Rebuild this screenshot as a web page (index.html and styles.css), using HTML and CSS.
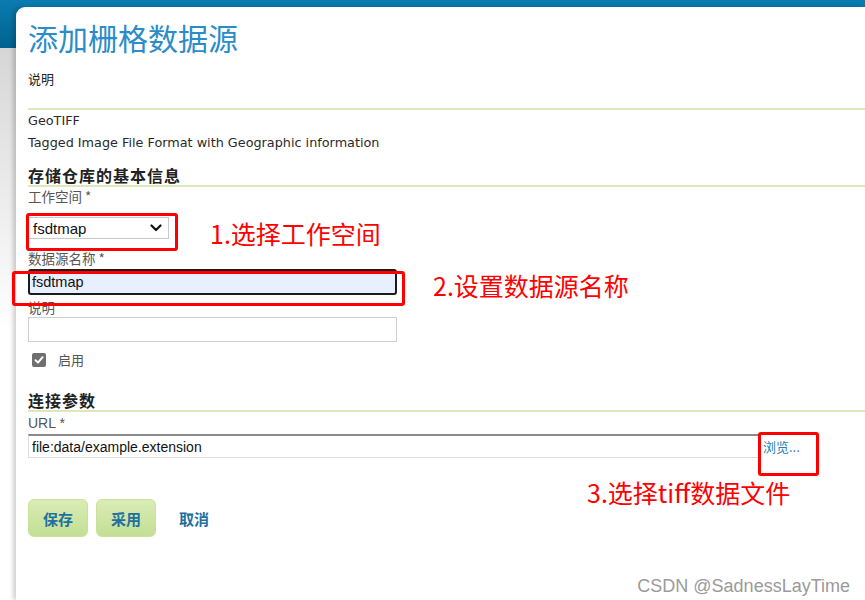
FILE: index.html
```html
<!DOCTYPE html>
<html lang="zh-CN">
<head>
  <meta charset="UTF-8">
  <title>添加栅格数据源</title>
  <link rel="stylesheet" href="styles.css">
</head>
<body>

<div class="page">
  <div class="panel">
    <h1 class="title">添加栅格数据源</h1>
    <p class="desc">说明</p>
    <div class="rule"></div>

    <div class="info">
      <div>GeoTIFF</div>
      <div>Tagged Image File Format with Geographic information</div>
    </div>

    <h2 class="section">存储仓库的基本信息</h2>
    <div class="rule"></div>

    <label class="field-label">工作空间 *</label>
    <div class="select">
      <span>fsdtmap</span>
      <svg width="12" height="8" viewBox="0 0 12 8"><path d="M1.5 1.5 L6 6 L10.5 1.5" fill="none" stroke="#111" stroke-width="2.2" stroke-linecap="round" stroke-linejoin="round"/></svg>
    </div>

    <label class="field-label label-name">数据源名称 *</label>
    <input class="text-input focused" type="text" value="fsdtmap">

    <label class="field-label label-desc">说明</label>
    <input class="text-input plain" type="text">

    <div class="check-row">
      <span class="checkbox">
        <svg width="10" height="10" viewBox="0 0 10 10"><path d="M1.5 5.2 L4 7.6 L8.6 2.2" fill="none" stroke="#fff" stroke-width="2" stroke-linecap="round" stroke-linejoin="round"/></svg>
      </span>
      <span>启用</span>
    </div>

    <h2 class="section section-conn">连接参数</h2>
    <div class="rule"></div>

    <label class="field-label label-url">URL *</label>
    <div class="url-row">
      <input class="text-input url" type="text" value="file:data/example.extension">
      <a class="browse" href="#">浏览...</a>
    </div>

    <div class="actions">
      <button class="btn">保存</button>
      <button class="btn">采用</button>
      <a class="cancel" href="#">取消</a>
    </div>
  </div>

  <!-- annotations drawn over the screenshot -->
  <div class="mark mark-1"></div>
  <div class="mark mark-2"></div>
  <div class="mark mark-3"></div>
  <div class="note note-1">1.选择工作空间</div>
  <div class="note note-2">2.设置数据源名称</div>
  <div class="note note-3">3.选择tiff数据文件</div>
  <div class="watermark">CSDN @SadnessLayTime</div>
</div>

</body>
</html>
```

FILE: styles.css
```css
html, body {
  margin: 0;
  height: 100%;
}
body {
  font-family: "DejaVu Sans", "Noto Sans CJK SC", sans-serif;
  color: #333;
  background: linear-gradient(to bottom, #0a7cb0 0, #00628f 48px, #d6d6d6 48px, #ffffff 330px);
  overflow: hidden;
}
.page {
  position: relative;
  height: 600px;
}
.panel {
  margin: 7px 0 0 16px;
  padding: 12px 0 0 12px;
  height: 581px;
  background: #fff;
  border-radius: 9px 0 0 0;
  box-shadow: -3px 0 4px rgba(0,0,0,0.18);
}
.title {
  margin: 0;
  font-family: "Noto Sans CJK SC", sans-serif;
  font-size: 30px;
  line-height: 36px;
  font-weight: normal;
  color: #2a8cc8;
}
.desc {
  margin: 15px 0 0;
  font-family: "Noto Sans CJK SC", sans-serif;
  font-size: 13px;
  line-height: 18px;
  color: #222;
}
.rule {
  height: 2px;
  background: #dbe8bc;
}
.desc + .rule {
  margin-top: 20px;
}
.info {
  font-size: 12.8px;
  line-height: 22px;
  color: #2a2a2a;
}
.section {
  margin: 11px 0 0;
  font-family: "Noto Sans CJK SC", sans-serif;
  font-size: 16px;
  letter-spacing: 1px;
  line-height: 20px;
  font-weight: bold;
  color: #222;
}
.section-conn {
  margin-top: 20px;
}
.field-label {
  display: block;
  font-family: "Noto Sans CJK SC", sans-serif;
  font-size: 13.5px;
  line-height: 18px;
  color: #555;
}
.select {
  margin-top: 12px;
  width: 129px;
  height: 20px;
  padding: 0 6px 0 4px;
  border: 1px solid #c8c8c8;
  display: flex;
  align-items: center;
  justify-content: space-between;
  font-family: "Liberation Sans", sans-serif;
  font-size: 15px;
  color: #111;
  box-sizing: content-box;
}
.select span {
  margin-top: 1px;
}
.label-name {
  margin-top: 10px;
}
.text-input {
  display: block;
  box-sizing: border-box;
  width: 369px;
  font-family: "Liberation Sans", sans-serif;
  font-size: 14px;
  color: #111;
  outline: none;
}
.focused {
  margin-top: 2px;
  height: 26px;
  padding: 0 2px;
  border: 2px solid #1c1c1c;
  border-radius: 3px;
  background: #e8f0fe;
  font-size: 14.5px;
}
.label-desc {
  margin-top: 3px;
}
.plain {
  margin-top: 1px;
  height: 25px;
  border: 1px solid #cfcfcf;
  background: #fff;
}
.check-row {
  margin-top: 8px;
  padding-left: 4px;
  display: flex;
  align-items: center;
  gap: 12px;
  font-family: "Noto Sans CJK SC", sans-serif;
  font-size: 13px;
  line-height: 20px;
  color: #555;
}
.checkbox {
  width: 14px;
  height: 14px;
  border-radius: 2px;
  background: #6f6f6f;
  display: flex;
  align-items: center;
  justify-content: center;
}
.label-url {
  margin-top: 2px;
  font-family: "Liberation Sans", sans-serif;
  font-size: 14px;
}
.url-row {
  margin-top: 2px;
  display: flex;
  align-items: center;
  gap: 3px;
}
.url {
  width: 732px;
  height: 24px;
  padding: 0 3px;
  border: 1px solid #dcdcdc;
  border-top: 2px solid #8a8a8a;
  background: #fff;
}
.browse {
  font-family: "Noto Sans CJK SC", sans-serif;
  font-size: 13px;
  color: #2a7fb5;
  text-decoration: none;
}
.actions {
  margin-top: 41px;
  display: flex;
  align-items: center;
  gap: 8px;
}
.btn {
  width: 60px;
  height: 38px;
  padding: 0;
  border: 1px solid #c9e19d;
  border-radius: 6px;
  background: linear-gradient(to bottom, #d9ecb6 0, #c3df94 100%);
  font-family: "Noto Sans CJK SC", sans-serif;
  font-size: 15px;
  font-weight: bold;
  color: #22709e;
  cursor: pointer;
}
.cancel {
  margin-left: 15px;
  font-family: "Noto Sans CJK SC", sans-serif;
  font-size: 15px;
  font-weight: bold;
  color: #22709e;
  text-decoration: none;
}
.mark {
  position: absolute;
  border: 3px solid #ff0000;
  border-radius: 3px;
  box-sizing: border-box;
}
.mark-1 { left: 26px; top: 206px; width: 152px; height: 38px; }
.mark-2 { left: 12px; top: 264px; width: 393px; height: 35px; }
.mark-3 { left: 758px; top: 425px; width: 61px; height: 44px; }
.note {
  position: absolute;
  font-family: "Noto Sans CJK SC", sans-serif;
  font-size: 25px;
  line-height: 30px;
  color: #ff0000;
  white-space: nowrap;
}
.note-1 { left: 210px; top: 211px; }
.note-2 { left: 433px; top: 263px; }
.note-3 { left: 587px; top: 470px; }
.watermark {
  position: absolute;
  right: 15px;
  top: 567px;
  font-family: "Liberation Sans", sans-serif;
  font-size: 18px;
  line-height: 24px;
  color: #9a9a9a;
  text-shadow: 1px 1px 1px rgba(255,255,255,0.8);
}
```
